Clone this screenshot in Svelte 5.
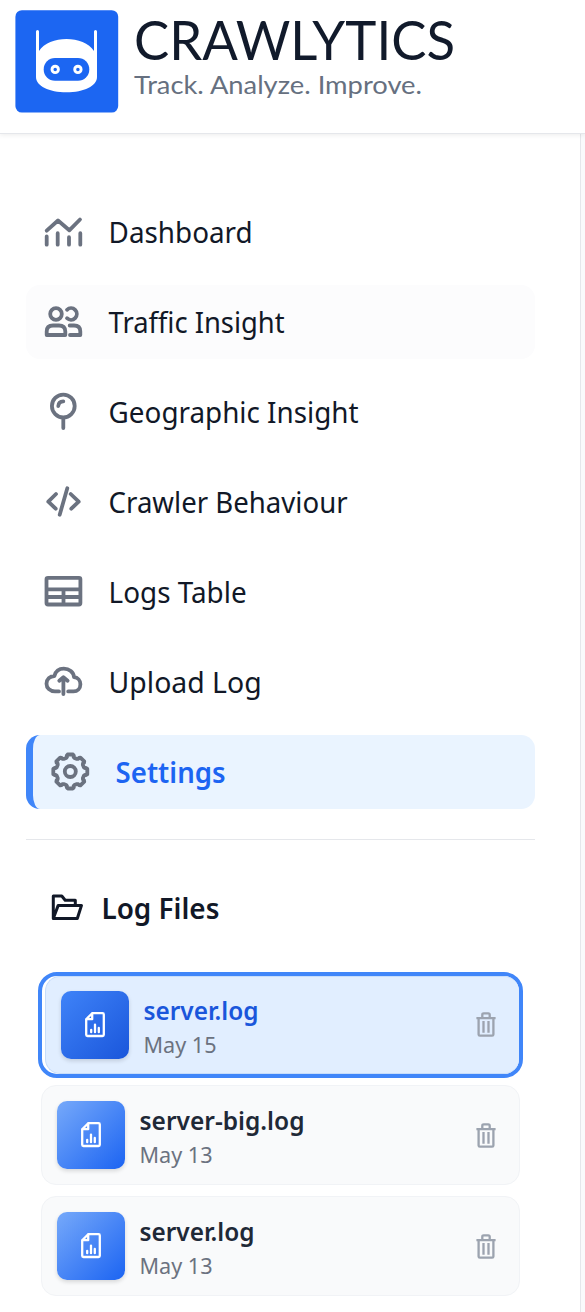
<script>
  const gear = (() => {
    const pts = [];
    for (let k = 0; k < 8; k++) {
      for (const [deg, r] of [[-17, 14.2], [-13, 14.9], [-12.5, 16.2], [-9, 17.2], [9, 17.2], [12.5, 16.2], [13, 14.9], [17, 14.2]]) {
        const a = ((k * 45 + deg - 90) * Math.PI) / 180;
        pts.push(`${(22.3 + r * Math.cos(a)).toFixed(2)} ${(21.5 + r * Math.sin(a)).toFixed(2)}`);
      }
    }
    return `M${pts.join('L')}Z M27.8 21.5a5.5 5.5 0 1 1-11 0a5.5 5.5 0 1 1 11 0Z`;
  })();

  const nav = [
    { label: 'Dashboard', width: 144, icon: 'M5.7 20.7L17 10.5L28.3 20.3L39 9.5M5.7 26.5V34.7M16.7 23.2V34.7M28 27.2V34.7M39.3 23.2V34.7' },
    { label: 'Traffic Insight', width: 176, hover: true, icon: 'M20.8 14a5.8 5.8 0 1 1-11.6 0a5.8 5.8 0 1 1 11.6 0ZM26 9.8A5.8 5.8 0 1 1 26 18.2M5.7 35V31.5Q5.7 25.5 12 25.5H18Q24.3 25.5 24.3 31.5V35ZM28.7 25.5H33Q39.3 25.5 39.3 31.5V35H29' },
    { label: 'Geographic Insight', width: 250, icon: 'M33.7 16a11.4 11.4 0 1 1-22.8 0a11.4 11.4 0 1 1 22.8 0ZM22.3 28V38M17.3 16Q17.5 11.5 22.3 11.3' },
    { label: 'Crawler Behaviour', width: 239, icon: 'M15 14L7.3 21.7L14.7 28.7M26.3 8.3L18.7 34.7M29.7 14L37.7 21.7L30.3 28.7' },
    { label: 'Logs Table', width: 138, icon: 'M7 7.8H38Q39.4 7.8 39.4 9.2V33Q39.4 34.5 38 34.5H7Q5.5 34.5 5.5 33V9.2Q5.5 7.8 7 7.8ZM5.5 19.3H39.5M5.5 27H39.5M22.5 19.3V34.5' },
    { label: 'Upload Log', width: 153, icon: 'M18 31.4H14C9 31.4 5.5 28 5.5 23.7C5.5 19.3 9 16 13.4 16C14.5 11.6 18 8.6 22.8 8.6C28.2 8.6 32.6 12.2 33 17.2C36.8 17.5 39.4 20.5 39.4 24.3C39.4 28.3 36.5 31.4 32.5 31.4H27.2M22.4 34V17.3M18.3 20.8L22.4 17.3L26.6 20.8' },
    { label: 'Settings', width: 110, active: true, icon: gear }
  ];
  const files = [
    { name: 'server.log', width: 115, date: 'May 15', active: true },
    { name: 'server-big.log', width: 165, date: 'May 13' },
    { name: 'server.log', width: 115, date: 'May 13' }
  ];
</script>

<div class="page">
  <header>
    <svg width="470" height="125" viewBox="0 0 470 125">
      <rect x="15.4" y="10.2" width="102.8" height="102.4" rx="6.5" fill="#1c66f2" />
      <path fill="#fff" d="M36 31.5a1.5 1.5 0 0 1 3 0V51C49 35 84 35 94 51V31.5a1.5 1.5 0 0 1 3 0V77C97 86 84 92.3 66.5 92.3S36 86 36 77Z" />
      <rect x="43.7" y="58" width="45.6" height="22.7" rx="11.3" fill="#1c66f2" />
      <g fill="#1c66f2" stroke="#fff" stroke-width="2.9"><circle cx="55.2" cy="69.4" r="3.2" /><circle cx="77.9" cy="69.4" r="3.2" /></g>
      <text class="brand" x="134" y="60" textLength="321" lengthAdjust="spacingAndGlyphs">CRAWLYTICS</text>
      <text class="tagline" x="134" y="93.7" textLength="288" lengthAdjust="spacingAndGlyphs">Track. Analyze. Improve.</text>
    </svg>
  </header>
  <aside>
    <nav>
      {#each nav as item}
        <div class="item" class:hover={item.hover} class:active={item.active}>
          <svg class="icon" width="44" height="44" viewBox="0 0 44 44"><path d={item.icon} /></svg>
          <svg class="label" width={item.width + 4} height="44"><text x="-.4" y="33" textLength={item.width} lengthAdjust="spacingAndGlyphs">{item.label}</text></svg>
        </div>
      {/each}
    </nav>
    <section>
      <h2>
        <svg width="34" height="28" viewBox="0 0 34 28"><path d="M2.3 24.5V2H10.8L14.2 6.3H24.3V10.8M2.3 24.5L7.2 11.4H30.5L26.3 24.5Z" /></svg>
        <svg class="label" width="122" height="44"><text x="-.6" y="33" textLength="118" lengthAdjust="spacingAndGlyphs">Log Files</text></svg>
      </h2>
      <div class="files">
        {#each files as file}
          <div class="ring" class:selected={file.active}>
            <div class="card">
              <div class="tile">
                <svg width="68" height="68" viewBox="0 -1 68 68">
                  <path d="M31.2 21.2H41.5Q42.8 21.2 42.8 22.5V42.8Q42.8 44 41.5 44H26.5Q25.2 44 25.2 42.8V27.2ZM31.2 21.2V27.2H25.2" />
                  <path d="M30.2 37.8V40.2M34 32.6V40.2M37.8 36V40.2" />
                </svg>
              </div>
              <svg class="info" width="180" height="68">
                <text class="name" x="-.5" y="29" textLength={file.width} lengthAdjust="spacingAndGlyphs">{file.name}</text>
                <text class="date" x="-.5" y="61.5" textLength="73" lengthAdjust="spacingAndGlyphs">{file.date}</text>
              </svg>
              <svg class="trash" width="20" height="25" viewBox="0 0 20 25"><path d="M.4 6.2H19.6M2.6 6.2V22.4Q2.6 23.7 3.9 23.7H16.1Q17.4 23.7 17.4 22.4V6.2M6.3 6V2.7Q6.3 1.3 7.7 1.3H12.3Q13.7 1.3 13.7 2.7V6M7.5 9V20.8M12.5 9V20.8" /></svg>
            </div>
          </div>
        {/each}
      </div>
    </section>
  </aside>
</div>

<style>
  :global(body) { background: #f9fafb; overflow: hidden; }
  svg { display: block; flex: none; overflow: visible; }
  .page { height: 1312px; overflow: hidden; font-family: 'Noto Sans', 'Open Sans', sans-serif; }
  header { position: relative; height: 133px; background: #fff; border-bottom: 1px solid #e5e7eb; box-shadow: 0 1px 5px rgba(0, 0, 0, .08); }
  .brand { font: 400 53.5px Lato, sans-serif; fill: #111a2b; }
  .tagline { font: 400 24.5px Lato, sans-serif; fill: #667080; }
  aside { box-sizing: border-box; width: 581px; height: 1178px; padding: 61px 45px 0 26px; background: #fff; border-right: 1px solid #e5e7eb; }
  nav { display: flex; flex-direction: column; gap: 16px; padding-bottom: 30px; border-bottom: 1px solid #e5e7eb; }
  .item { box-sizing: border-box; display: flex; align-items: center; height: 74px; padding-left: 15px; gap: 24px; border-radius: 14px; }
  .hover { background: #fcfcfd; }
  .active { background: #eaf4ff; border-left: 7px solid #4086f9; }
  .icon path { fill: none; stroke: #6b7280; stroke-width: 3.8; stroke-linecap: round; stroke-linejoin: round; }
  .label text { font-size: 29px; fill: #111827; }
  .active .label text { fill: #1c64f2; font-weight: 600; }
  h2 { display: flex; align-items: center; gap: 17px; height: 44px; margin: 0; padding: 46px 0 0 25px; }
  h2 > svg:first-child path { fill: none; stroke: #111827; stroke-width: 3; stroke-linejoin: round; }
  h2 .label text { font-weight: 600; }
  .files { display: flex; flex-direction: column; gap: 11px; padding: 44px 15px 0; }
  .ring { height: 100px; }
  .card { box-sizing: border-box; display: flex; align-items: center; height: 100px; padding: 0 23px 0 15px; border: 1px solid #f1f3f6; border-radius: 15px; background: #f9fafb; }
  .selected { box-sizing: border-box; height: 106px; margin: -2.4px -3px -3.6px -3.5px; padding-left: 3px; border: 4px solid #4086f9; border-radius: 19px; background: #fff; }
  .selected .card { height: 98px; border-color: #c7ddfa; border-right: 0; background: #e1eeff; }
  .tile { width: 68px; height: 68px; border-radius: 10px; background: linear-gradient(135deg, #76a9fa, #1c64f2); box-shadow: 0 2px 4px rgba(0, 0, 0, .14); }
  .selected .tile { background: linear-gradient(135deg, #3f83f8, #1a56db); }
  .tile path { fill: none; stroke: #fff; stroke-width: 2.3; stroke-linecap: round; stroke-linejoin: round; }
  .info { margin-left: 15px; }
  .name { font-size: 25px; font-weight: 600; fill: #1f2937; }
  .date { font-size: 22px; fill: #6b7280; }
  .selected .name { fill: #1a56db; }
  .trash { margin-left: auto; }
  .trash path { fill: none; stroke: #9ca3af; stroke-width: 2.3; stroke-linejoin: round; }
</style>
